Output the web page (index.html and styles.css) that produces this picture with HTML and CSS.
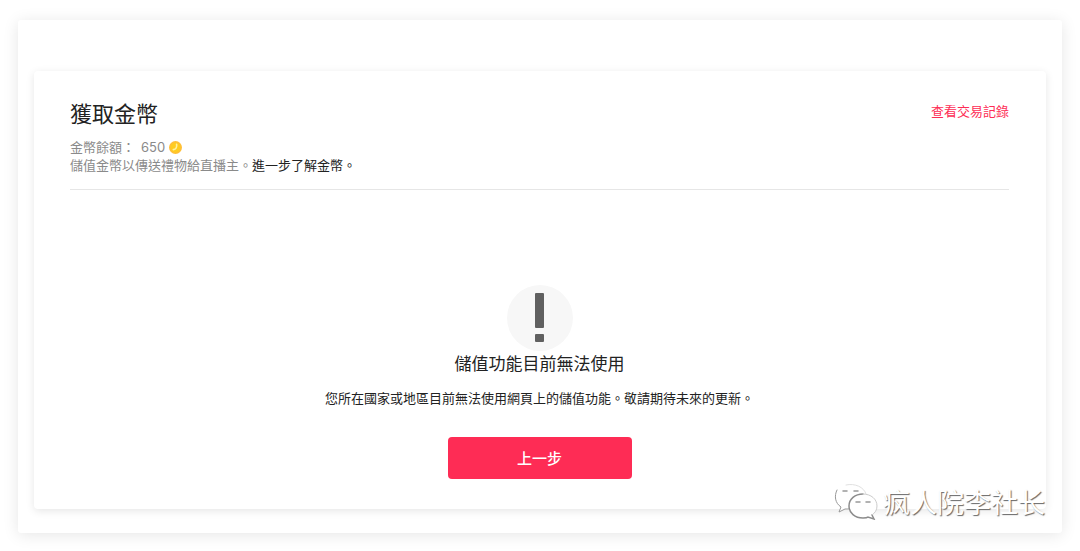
FILE: index.html
```html
<!DOCTYPE html>
<html lang="zh-Hant">
<head>
  <meta charset="UTF-8" />
  <meta name="viewport" content="width=device-width, initial-scale=1.0"/>
  <title>獲取金幣</title>
  <link rel="stylesheet" href="styles.css">
</head>
<body>
  <div class="page">
    <main class="card">
      <header class="card-header">
        <div>
          <h1>獲取金幣</h1>
          <p class="balance">
            <span>金幣餘額：</span>
            <span class="amount">650</span>
            <svg class="coin" viewBox="0 0 24 24" aria-hidden="true">
              <circle cx="12" cy="12" r="12" fill="#ffbf38"/>
              <circle cx="12" cy="12" r="9" fill="#ffcc1f"/>
              <path d="M14 6c1 5-1 9-6 10" fill="none" stroke="#fff0a0" stroke-width="3" stroke-linecap="round"/>
            </svg>
          </p>
          <p class="hint">儲值金幣以傳送禮物給直播主。<a href="#">進一步了解金幣。</a></p>
        </div>
        <a class="history-link" href="#">查看交易記錄</a>
      </header>

      <section class="notice">
        <svg class="notice-icon" viewBox="0 0 66 66" aria-hidden="true">
          <circle cx="33" cy="33" r="33" fill="#f7f7f7"/>
          <rect x="28" y="8" width="9" height="35" rx="1" fill="#606060"/>
          <rect x="28" y="49" width="9" height="8" rx="1" fill="#606060"/>
        </svg>
        <h2>儲值功能目前無法使用</h2>
        <p>您所在國家或地區目前無法使用網頁上的儲值功能。敬請期待未來的更新。</p>
        <button type="button">上一步</button>
      </section>
    </main>
  </div>

  <div class="watermark" lang="zh-Hans">
    <svg viewBox="0 0 44 36" fill="none" stroke-linecap="round" aria-hidden="true">
      <path d="M17 1C8 1 1 6 1 13c0 4 2 7 6 10l-2 5 6-3c2 1 4 1 6 1 9 0 16-6 16-13S26 1 17 1z" fill="#fff"/>
      <path d="M29 10c-8 0-14 5-14 12s6 12 14 12c2 0 4 0 5-1l6 2-2-4c3-2 5-5 5-9 0-7-6-12-14-12z" fill="#fff"/>
      <!-- left bubble -->
      <path d="M3 6C0 12 1 19 7 23l-2 5 6-3h4" stroke="#999"/>
      <path d="M12 1c9-2 18 2 20 9" stroke="#e0e0e0"/>
      <!-- right bubble -->
      <path d="M29 10c-8 0-14 5-14 12s6 12 14 12c2 0 4 0 5-1l6 2-2-4" stroke="#8c8c8c" stroke-width="1.5"/>
      <path d="M29 10c8 0 14 5 14 12 0 4-2 7-5 9" stroke="#ccc"/>
      <path d="M9 7h4M20 7h4M22 18h4M32 18h4" stroke="#999" stroke-width="1.5"/>
    </svg>
    <span>疯人院李社长</span>
  </div>
</body>
</html>
```
FILE: styles.css
```css
body {
  margin: 0;
  padding: 20px 18px 18px;
  background-color: #fff;
  color: #222;
  font-family: "Noto Sans CJK TC", sans-serif;
  font-size: 13px;
  line-height: 18px;
}

h1, h2, p {
  margin: 0;
  font-weight: 400;
}

a {
  color: inherit;
  text-decoration: none;
}

.page {
  padding: 51px 16px 24px;
  border-radius: 3px;
  background: #fff;
  box-shadow: 0 2px 16px rgba(0, 0, 0, 0.1);
}

.card {
  padding: 25px 37px 30px 36px;
  border-radius: 4px;
  background: #fff;
  box-shadow: 0 2px 8px rgba(0, 0, 0, 0.1);
}

.card-header {
  display: flex;
  justify-content: space-between;
  align-items: flex-start;
  padding-bottom: 15px;
  border-bottom: 1px solid #e6e6e6;
}

h1 {
  margin-bottom: 10px;
  font-size: 22px;
  line-height: 32px;
}

.balance {
  display: flex;
  align-items: center;
  color: #8a8a8a;
}

.amount {
  margin: 0 4px 0 6px;
  font-family: Inter, sans-serif;
}

.coin {
  width: 13px;
  height: 13px;
}

.hint {
  color: #8a8a8a;
}

.hint a {
  color: #222;
}

.history-link {
  margin-top: 6px;
  color: #fe2c55;
}

.notice {
  display: flex;
  flex-direction: column;
  align-items: center;
  padding-top: 95px;
  text-align: center;
}

.notice-icon {
  width: 66px;
  height: 66px;
}

h2 {
  margin-bottom: 14px;
  font-size: 17px;
  line-height: 24px;
}

button {
  width: 184px;
  height: 42px;
  margin-top: 30px;
  padding: 0 0 2px;
  border: none;
  border-radius: 4px;
  background-color: #fe2c55;
  color: #fff;
  font-family: inherit;
  font-size: 15px;
  font-weight: 500;
  cursor: pointer;
}

/* account mark, stays over the corner of the card */
.watermark {
  position: absolute;
  right: 35px;
  bottom: 31px;
  display: flex;
  align-items: center;
  gap: 5px;
  color: #fff;
  font-family: "Noto Sans CJK SC", sans-serif;
  font-size: 27px;
  line-height: 36px;
  text-shadow: 1px 1px 1px #666;
}

.watermark svg {
  width: 44px;
  height: 36px;
}
```
